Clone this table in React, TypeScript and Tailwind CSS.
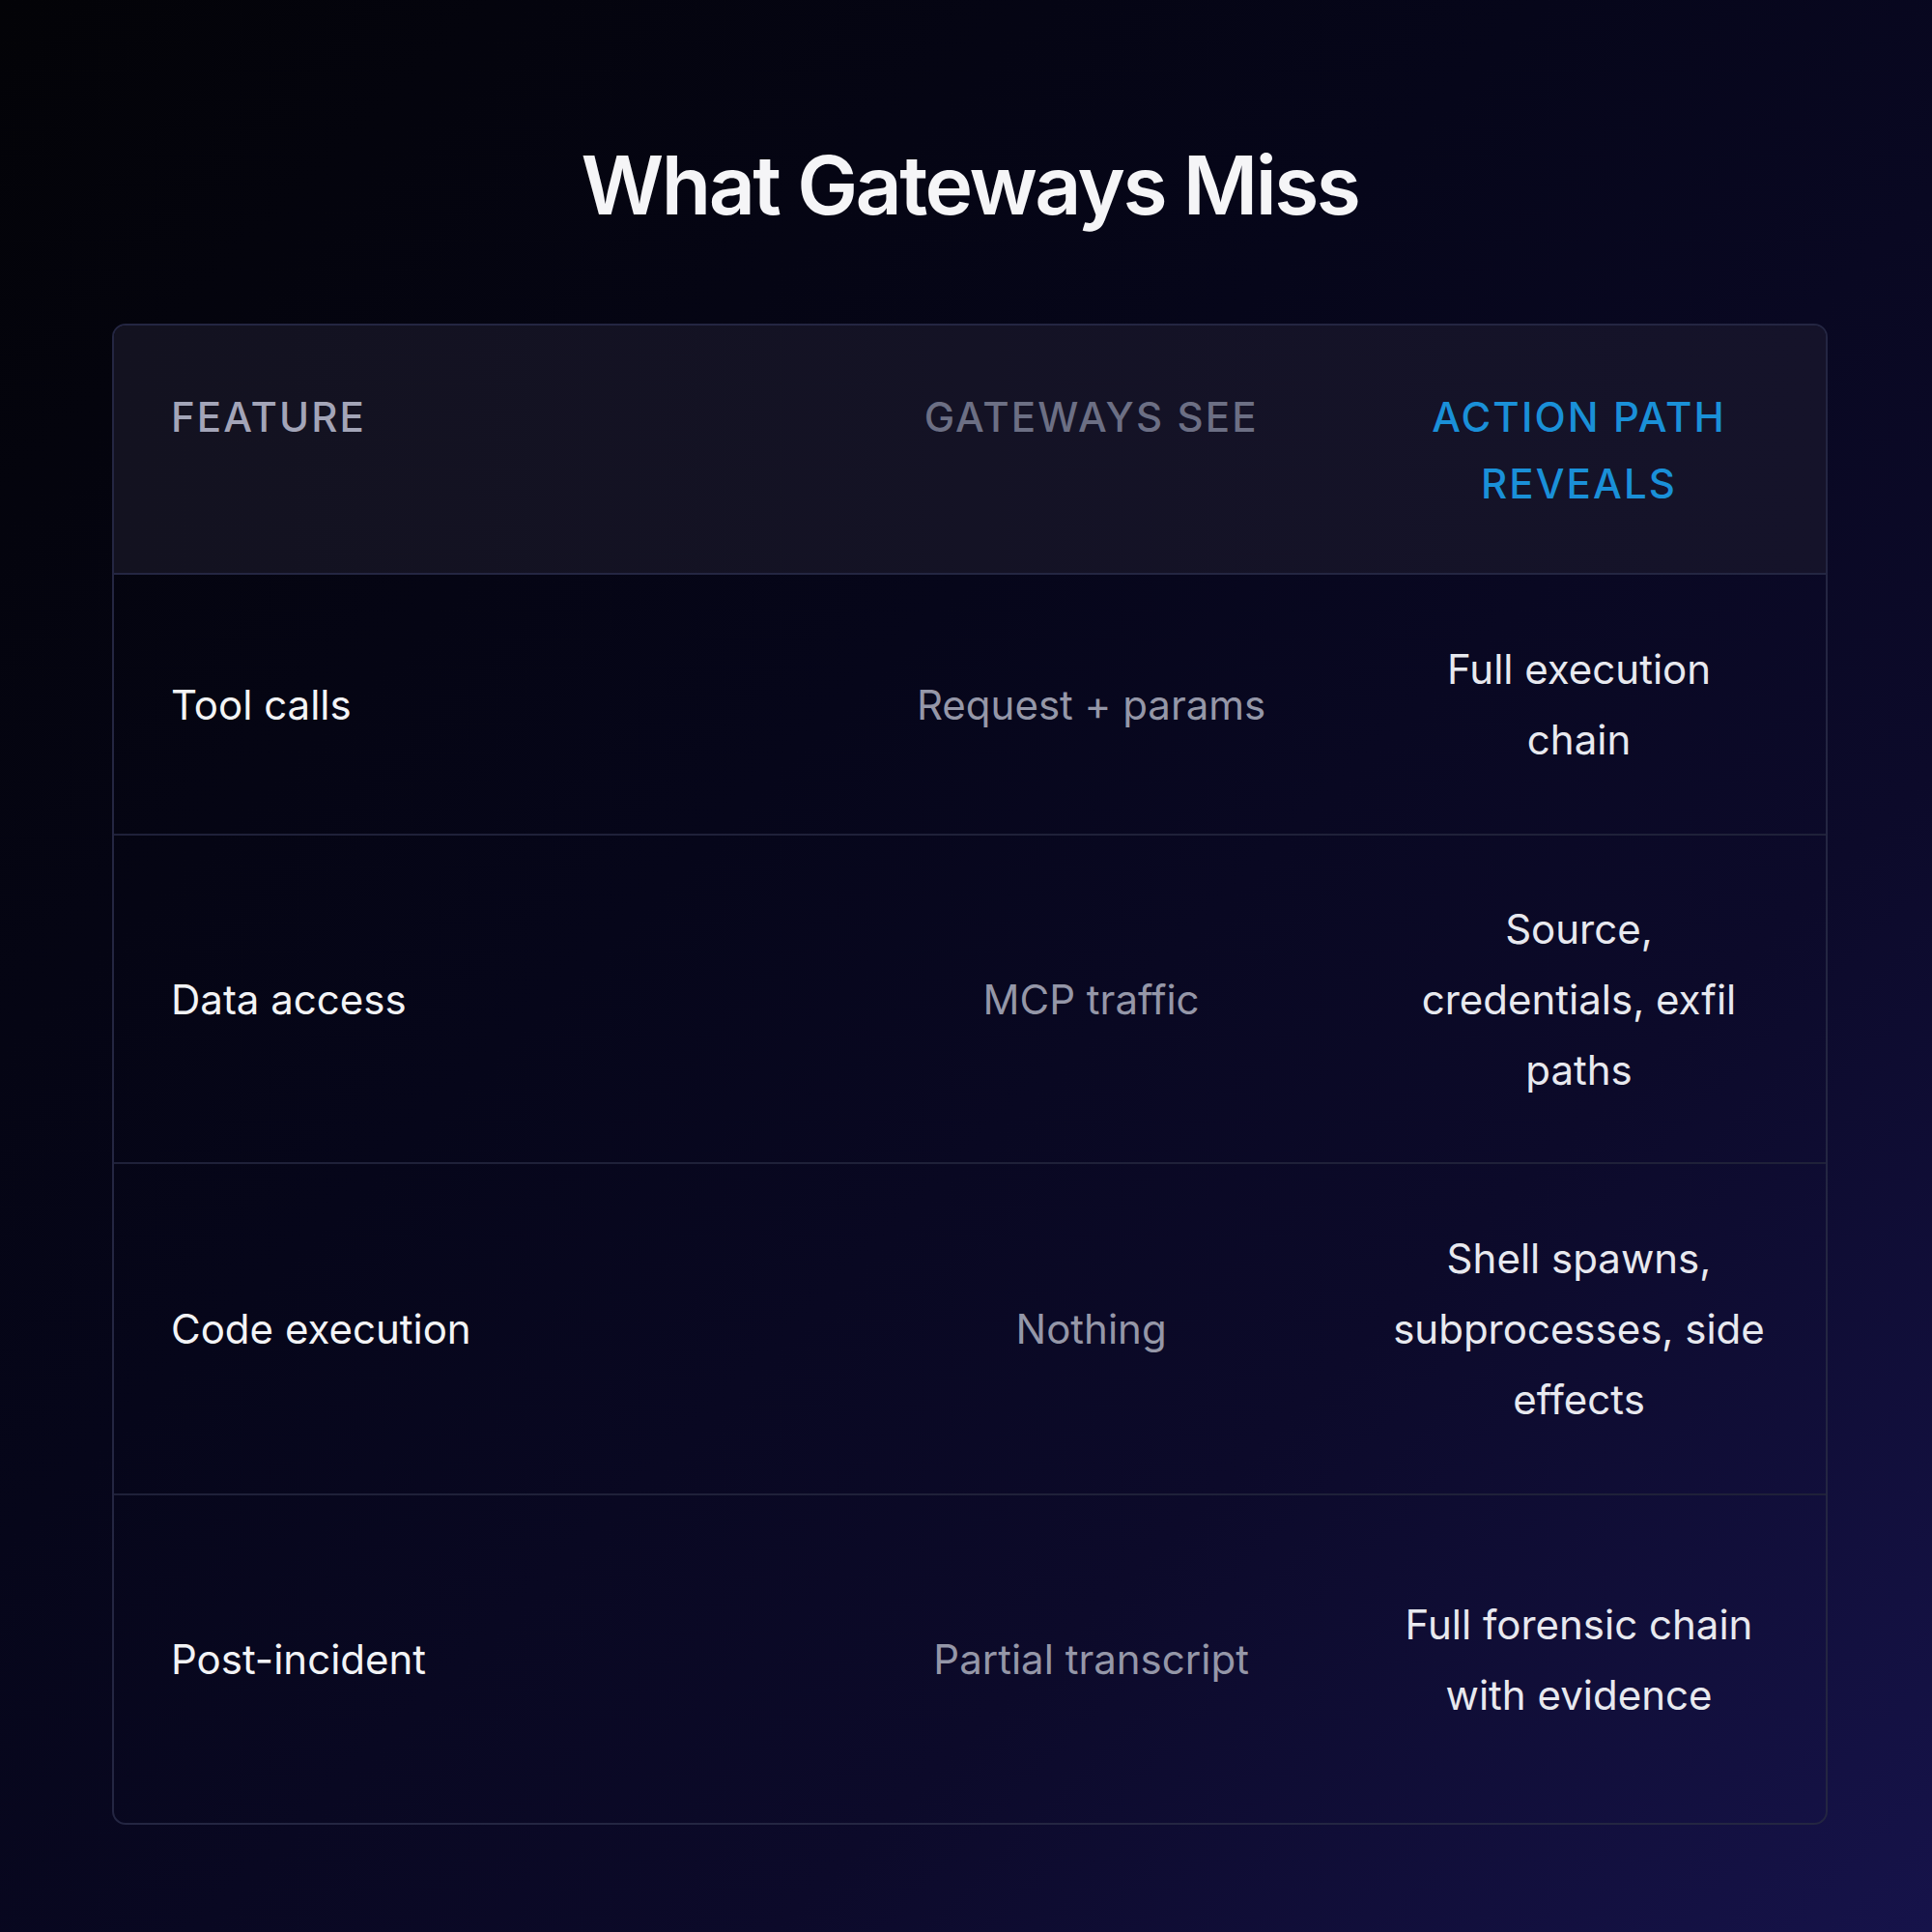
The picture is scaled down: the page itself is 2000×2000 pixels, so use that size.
const rows = [
  { feature: "Tool calls", gateway: "Request + params", reveals: "Full execution chain", h: "h-[270px]" },
  { feature: "Data access", gateway: "MCP traffic", reveals: "Source, credentials, exfil paths", h: "h-[340px]" },
  { feature: "Code execution", gateway: "Nothing", reveals: "Shell spawns, subprocesses, side effects", h: "h-[343px]" },
  { feature: "Post-incident", gateway: "Partial transcript", reveals: "Full forensic chain with evidence", h: "h-[339px]" },
];

export default function App() {
  return (
    <div className="w-[2000px] h-[2000px] overflow-hidden pl-[8px] bg-[linear-gradient(135deg,#030307_0%,#06061a_40%,#0c0a2a_70%,#16134a_100%)] font-['Inter',sans-serif] flex flex-col items-center">
      <h1 className="mt-[150px] text-[84px] leading-none font-semibold tracking-[-0.03em] text-[#f5f5f7]">What Gateways Miss</h1>

      <div className="mt-[101px] w-[1776px] rounded-[14px] border-2 border-[#242642] overflow-hidden">
        <div className="flex h-[258px] bg-[linear-gradient(90deg,#131220_0%,#15132a_100%)] border-b-2 border-[#242642] pt-[60px] text-[42px] leading-[69px] font-medium tracking-[0.05em]">
          <div className="w-[764px] pl-[59px] text-[#a3a5b8]">FEATURE</div>
          <div className="w-[500px] text-center text-[#6c6f84]">GATEWAYS SEE</div>
          <div className="w-[512px] px-[60px] text-center text-[#1a90d8]">ACTION PATH REVEALS</div>
        </div>
        {rows.map((r, i) => (
          <div key={r.feature} className={`flex items-center ${r.h} ${i < rows.length - 1 ? "border-b-2 border-[#1f2139]" : ""} text-[42px] leading-[73px]`}>
            <div className="w-[764px] pl-[59px] text-[#f3f4f6]">{r.feature}</div>
            <div className="w-[500px] text-center text-[#9597a8]">{r.gateway}</div>
            <div className="w-[512px] px-[62px] text-center text-[#e8e9ef]">{r.reveals}</div>
          </div>
        ))}
      </div>
    </div>
  );
}
